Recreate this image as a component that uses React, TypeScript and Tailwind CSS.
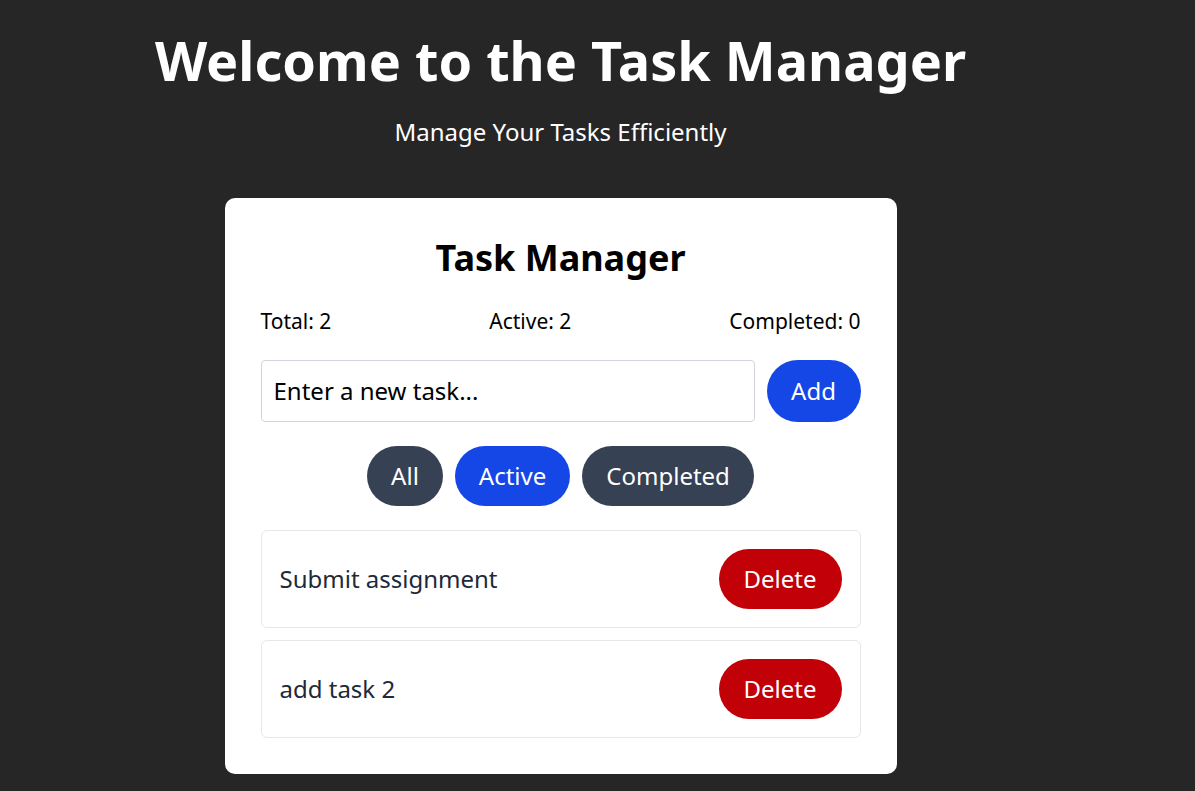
import React, { useState } from "react"

type Task = { id: number; text: string; completed: boolean }

export default function App() {
    const [tasks, setTasks] = useState<Task[]>([
        { id: 1, text: "Submit assignment", completed: false },
        { id: 2, text: "add task 2", completed: false }
    ])
    const [filter, setFilter] = useState("Active")
    const [input, setInput] = useState("")

    const total = tasks.length
    const completed = tasks.filter(t => t.completed).length
    const active = total - completed

    const visible = tasks.filter(t =>
        filter == "All" ? true : filter == "Active" ? !t.completed : t.completed
    )

    const addTask = () => {
        if (!input.trim()) return
        setTasks([...tasks, { id: Date.now(), text: input, completed: false }])
        setInput("")
    }

    return (
        <div className="min-h-screen bg-[#262626] font-['Noto_Sans',sans-serif]">
            <div className="w-[1121px] flex flex-col items-center pt-[28px]">
                <h1 className="text-[54px] leading-[1.2] font-bold text-white">Welcome to the Task Manager</h1>
                <p className="mt-[25px] text-[24px] leading-[1.2] text-white">Manage Your Tasks Efficiently</p>

                <div className="mt-[51px] w-[672px] bg-white rounded-[10px] px-9 pt-[38px] pb-9 flex flex-col">
                    <h2 className="text-[36px] leading-[1.2] font-bold text-black text-center">Task Manager</h2>

                    <div className="mt-[30px] flex justify-between text-[21px] leading-[1.2] text-black">
                        <span>Total: {total}</span>
                        <span>Active: {active}</span>
                        <span>Completed: {completed}</span>
                    </div>

                    <div className="mt-[26px] flex gap-3">
                        <input
                            value={input}
                            onChange={e => setInput(e.target.value)}
                            className="flex-1 h-[62px] border border-[#d1d5db] rounded-[4px] px-3 text-[24px] text-black placeholder:text-black outline-none"
                            placeholder="Enter a new task..."
                        />
                        <button
                            onClick={addTask}
                            className="w-[94px] h-[62px] rounded-full bg-[#1447e6] text-white text-[24px]"
                        >
                            Add
                        </button>
                    </div>

                    <div className="mt-6 flex justify-center gap-3">
                        {["All", "Active", "Completed"].map(name => (
                            <button
                                key={name}
                                onClick={() => setFilter(name)}
                                className={
                                    filter == name
                                        ? "h-[60px] px-6 rounded-full bg-[#1447e6] text-white text-[24px]"
                                        : "h-[60px] px-6 rounded-full bg-[#364153] text-white text-[24px]"
                                }
                            >
                                {name}
                            </button>
                        ))}
                    </div>

                    <ul className="mt-6 flex flex-col gap-3">
                        {visible.map(task => (
                            <li
                                key={task.id}
                                className="flex items-center justify-between border border-[#e5e7eb] rounded-[6px] px-[18px] py-[18px]"
                            >
                                <span className="text-[24px] text-[#1e2939]">{task.text}</span>
                                <button
                                    onClick={() => setTasks(tasks.filter(t => t.id != task.id))}
                                    className="w-[123px] h-[60px] rounded-full bg-[#c10007] text-white text-[24px]"
                                >
                                    Delete
                                </button>
                            </li>
                        ))}
                    </ul>
                </div>
            </div>
        </div>
    )
}
